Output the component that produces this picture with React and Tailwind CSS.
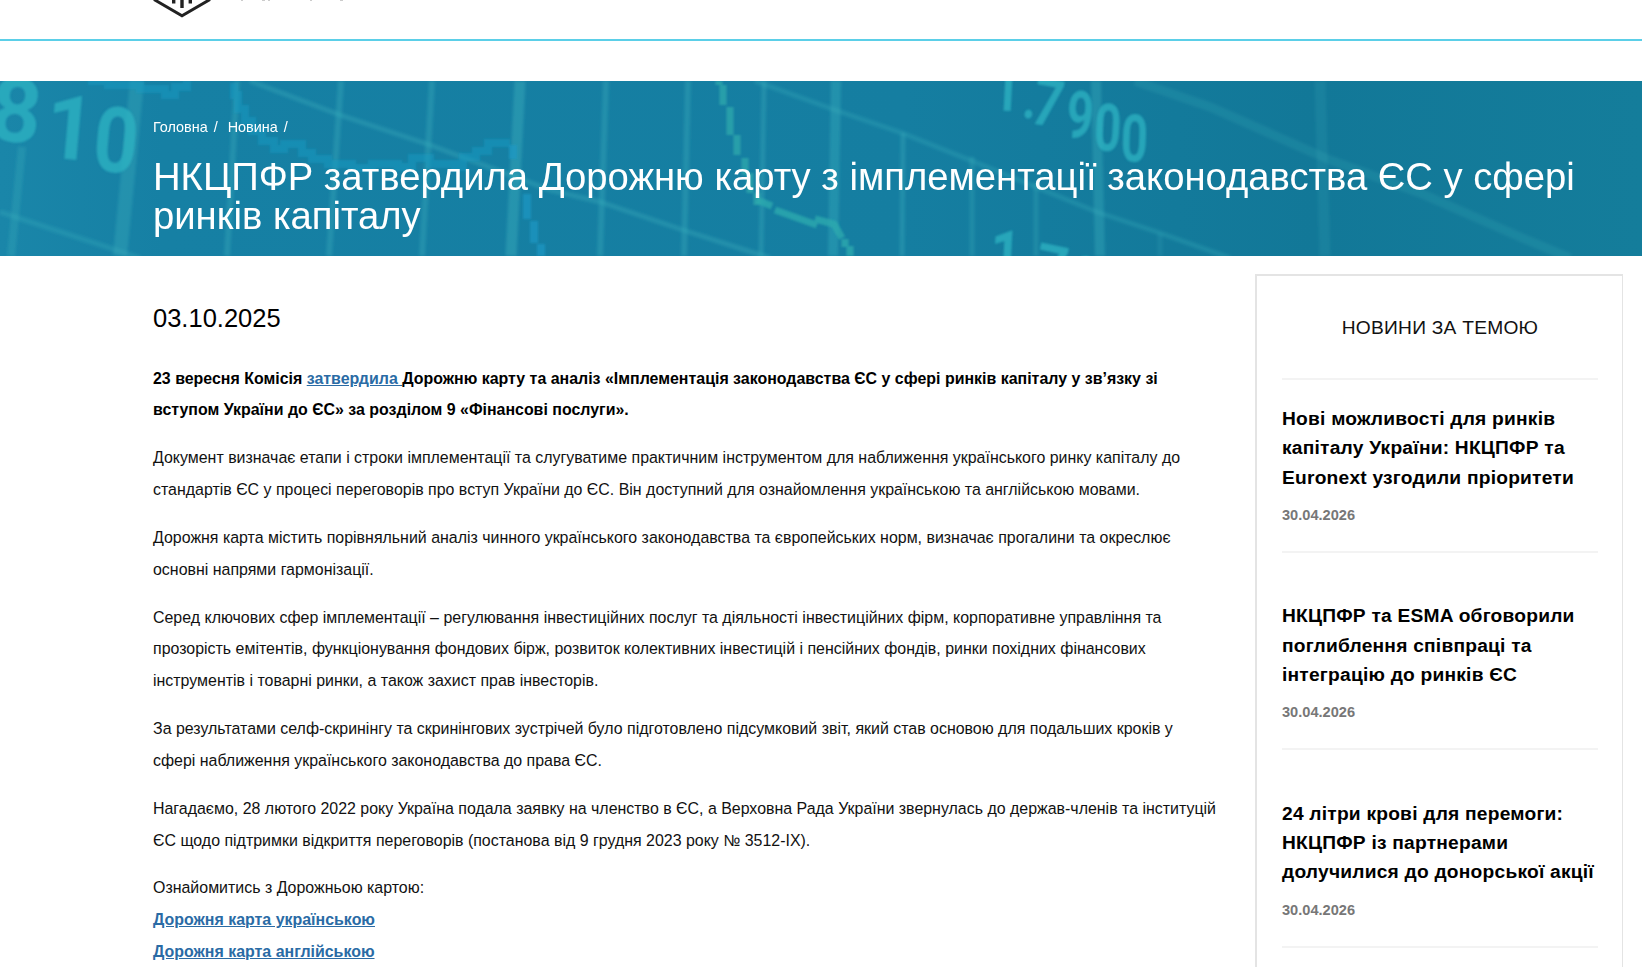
import React from "react";

const paragraphs = [
  [
    "Документ визначає етапи і строки імплементації та слугуватиме практичним інструментом для наближення українського ринку капіталу до",
    "стандартів ЄС у процесі переговорів про вступ України до ЄС. Він доступний для ознайомлення українською та англійською мовами.",
  ],
  [
    "Дорожня карта містить порівняльний аналіз чинного українського законодавства та європейських норм, визначає прогалини та окреслює",
    "основні напрями гармонізації.",
  ],
  [
    "Серед ключових сфер імплементації – регулювання інвестиційних послуг та діяльності інвестиційних фірм, корпоративне управління та",
    "прозорість емітентів, функціонування фондових бірж, розвиток колективних інвестицій і пенсійних фондів, ринки похідних фінансових",
    "інструментів і товарні ринки, а також захист прав інвесторів.",
  ],
  [
    "За результатами селф-скринінгу та скринінгових зустрічей було підготовлено підсумковий звіт, який став основою для подальших кроків у",
    "сфері наближення українського законодавства до права ЄС.",
  ],
  [
    "Нагадаємо, 28 лютого 2022 року Україна подала заявку на членство в ЄС, а Верховна Рада України звернулась до держав-членів та інституцій",
    "ЄС щодо підтримки відкриття переговорів (постанова від 9 грудня 2023 року № 3512-IX).",
  ],
];

const news = [
  {
    lines: ["Нові можливості для ринків", "капіталу України: НКЦПФР та", "Euronext узгодили пріоритети"],
    date: "30.04.2026",
  },
  {
    lines: ["НКЦПФР та ESMA обговорили", "поглиблення співпраці та", "інтеграцію до ринків ЄС"],
    date: "30.04.2026",
  },
  {
    lines: ["24 літри крові для перемоги:", "НКЦПФР із партнерами", "долучилися до донорської акції"],
    date: "30.04.2026",
  },
];

// [path, stroke width, opacity]
const gridLines = [
  ["M11 175L22 66", 8, 0.25],
  ["M120 175L137 0", 14, 0.3],
  ["M227 175L237 0", 6, 0.3],
  ["M329 175L341 0", 6, 0.3],
  ["M422 175L432 0", 6, 0.3],
  ["M511 175L520 0", 11, 0.38],
  ["M600 175L606 0", 6, 0.3],
  ["M684 175L688 0", 6, 0.3],
  ["M761 175L764 0", 5, 0.3],
  ["M833 175L836 0", 10, 0.34],
  ["M902 175L903 52", 5, 0.3],
  ["M972 175V76", 5, 0.25],
  ["M1036 175V102", 5, 0.25],
  ["M1100 175L1096 0", 10, 0.32],
  ["M1160 175V152", 5, 0.15],
  ["M1325 175L1320 0", 11, 0.14],
  ["M0 131L110 167L140 177", 5, 0.26],
  ["M250 0L340 34L430 64L550 109L600 121L683 149L770 177", 5, 0.3],
  ["M755 0L835 29L902 52L972 80L1097 131L1160 152L1230 177", 5, 0.26],
  ["M1135 0L1210 26L1330 79L1420 112L1520 156L1570 177", 9, 0.17],
];

// blurred quotes on the trading screen: [glyph, x, y, size, angle, x scale]
const quotes = [
  ["8", -13, 58, 90, 6, 1],
  ["1", 43, 76, 90, 5, 0.95],
  ["0", 91, 89, 91, 5, 0.86],
  ["1", 991, 29, 67, 3, 0.75],
  [".", 1021, 36, 60, 10, 0.8],
  ["7", 1029, 42, 66, 10, 0.8],
  ["9", 1065, 56, 66, 4, 0.72],
  ["0", 1093, 69, 66, 3, 0.72],
  ["0", 1120, 80, 66, 2, 0.72],
  ["1", 989, 196, 67, 3, 0.8],
  ["7", 1030, 207, 66, 12, 0.85],
  ["9", 1068, 221, 66, 6, 0.72],
];

const BannerArt = () => (
  <svg
    className="absolute left-0 top-0"
    width="1642"
    height="175"
    viewBox="0 0 1642 175"
    fill="none"
    aria-hidden="true"
  >
    <defs>
      <linearGradient id="base" x1="0" x2="1" y1="0" y2="0">
        <stop offset="0" stopColor="#1a86a9" />
        <stop offset="0.1" stopColor="#1680a4" />
        <stop offset="0.55" stopColor="#157ea1" />
        <stop offset="0.8" stopColor="#127898" />
        <stop offset="1" stopColor="#147d9b" />
      </linearGradient>
      <filter id="soft" filterUnits="userSpaceOnUse" x="-20" y="-40" width="1700" height="260">
        <feGaussianBlur stdDeviation="1.8" />
      </filter>
      <filter id="slight" filterUnits="userSpaceOnUse" x="-20" y="-60" width="1700" height="320">
        <feGaussianBlur stdDeviation="1" />
      </filter>
    </defs>
    <rect width="1642" height="175" fill="url(#base)" />
    <g stroke="#3fb6c0" filter="url(#soft)">
      {gridLines.map(([d, width, opacity]) => (
        <path key={d} d={d} strokeWidth={width} strokeOpacity={opacity} />
      ))}
    </g>
    <g filter="url(#slight)">
      <path
        d="M88 0H108V4H140V8H165V14H175V6H187V0M234 2V14H238V28H245V40H252V50H262V60H274V68H284V63H302V72H312V78H328V83H352V87H372V83H398V86H412V77H430V83H455V86H463V76H476V70H488V62H510"
        stroke="#1a9cc4"
        strokeOpacity="0.5"
        strokeWidth="8"
      />
      <path
        d="M513 64V78M527 113V138M534 140V162M541 163V175"
        stroke="#1899c6"
        strokeOpacity="0.65"
        strokeWidth="8"
      />
      <path
        d="M719 0V4M723 4V24M730 26V54M737 54V74M745 77V94M750 92V112M757 112V124"
        stroke="#2ea9ac"
        strokeOpacity="0.75"
        strokeWidth="7"
      />
      <path
        d="M757 119L772 125M775 129L817 144M815 138L834 143L842 157M845 158V166M850 165V175"
        stroke="#2eacaf"
        strokeOpacity="0.75"
        strokeWidth="7"
      />
    </g>
    <g
      fill="#2fb4c3"
      fillOpacity="0.75"
      filter="url(#slight)"
      fontFamily="Roboto, sans-serif"
      fontWeight="bold"
    >
      {quotes.map(([glyph, x, y, size, angle, scale], index) => (
        <text key={index} fontSize={size} transform={`translate(${x} ${y}) rotate(${angle}) scale(${scale} 1)`}>
          {glyph}
        </text>
      ))}
    </g>
  </svg>
);

const Line = ({ children }) => (
  <span className="block whitespace-nowrap">{children}</span>
);

const App = () => {
  return (
    <div className="h-[967px] overflow-hidden bg-white font-['Liberation_Sans',Arial,sans-serif] text-black">
      <header className="h-[41px] border-b-2 border-[#5bcfe8] pl-[153px]">
        <svg width="200" height="20" viewBox="0 0 200 20" fill="none" stroke="#222">
          <path d="M1 -0.500L29 15.800L57 -0.500" strokeWidth="3" />
          <path d="M20.700 -2V3.500M29 -2V8M37.300 -2V3.500" strokeWidth="3.400" />
          <path d="M88 0.500h2M109 0.500h3M115 0.500h2M157 0.500h2M187 0.500h3" stroke="#ccc" />
        </svg>
      </header>

      <section className="relative mt-10 h-[175px] overflow-hidden bg-[#167ea1] pl-[153px] pt-[35px] text-white">
        <BannerArt />
        <p className="relative flex text-[14.4px] leading-[22px]">
          <a>Головна</a>
          <span className="ml-1.5 mr-2.5">/</span>
          <a>Новина</a>
          <span className="ml-1.5">/</span>
        </p>
        <h1 className="relative mt-[19px] text-[38.24px] leading-[39px]">
          <Line>НКЦПФР затвердила Дорожню карту з імплементації законодавства ЄС у сфері</Line>
          <Line>ринків капіталу</Line>
        </h1>
      </section>

      <main className="flex pl-[153px]">
        <article className="w-[1102px] shrink-0 pt-[43px]">
          <p className="text-[25.5px] leading-[38px]">03.10.2025</p>
          <div className="mt-[25.5px] space-y-[15.93px] text-[15.94px] leading-[31.87px]">
            <p className="font-bold">
              <Line>
                23 вересня Комісія <a className="text-[#2a6ba5] underline">затвердила </a>Дорожню карту та аналіз «Імплементація законодавства ЄС у сфері ринків капіталу у зв’язку зі
              </Line>
              <Line>вступом України до ЄС» за розділом 9 «Фінансові послуги».</Line>
            </p>
            {paragraphs.map((lines, index) => (
              <p key={index} className="text-[#111]">
                {lines.map((line) => (
                  <Line key={line}>{line}</Line>
                ))}
              </p>
            ))}
            <p className="text-[#111]">
              <Line>Ознайомитись з Дорожньою картою:</Line>
              <a className="block font-bold text-[#2a6ba5] underline">Дорожня карта українською</a>
              <a className="block font-bold text-[#2a6ba5] underline">Дорожня карта англійською</a>
            </p>
          </div>
        </article>

        <aside className="mt-[18px] h-[720px] w-[368px] shrink-0 border-2 border-r border-[#e4e4e4] pl-[25px] pr-6">
          <h2 className="h-[104px] border-b-2 border-[#f3f3f3] pt-[37px] text-center text-[19.2px] leading-[29px] tracking-[0.24px] text-[#111]">
            НОВИНИ ЗА ТЕМОЮ
          </h2>
          {news.map((item, index) => (
            <div key={index} className="border-b-2 border-[#f3f3f3] pb-[25px] pt-[48.5px] first-of-type:pt-6">
              <h3 className="text-[19.2px] font-bold leading-[29.3px] tracking-[0.22px]">
                {item.lines.map((line) => (
                  <Line key={line}>{line}</Line>
                ))}
              </h3>
              <p className="mt-3 text-[14.6px] font-bold leading-[22px] text-[#777]">{item.date}</p>
            </div>
          ))}
        </aside>
      </main>
    </div>
  );
};

export default App;
